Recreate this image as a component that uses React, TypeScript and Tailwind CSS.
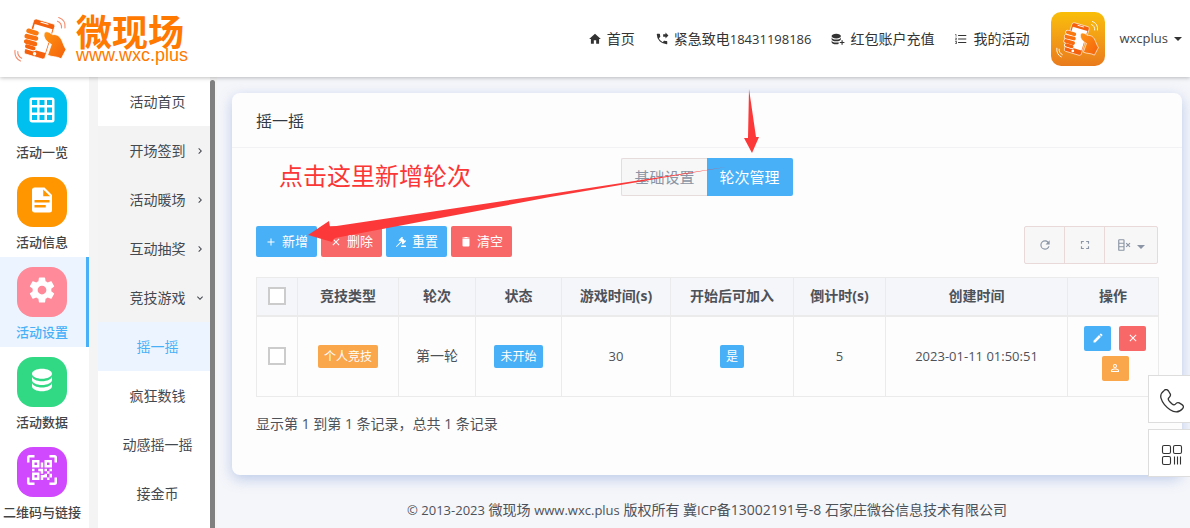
import React from "react";

const FONT = "font-['Open_Sans','Noto_Sans_CJK_SC',sans-serif]";

const P = {
  home: "M10,20V14H14V20H19V12H22L12,3L2,12H5V20H10Z",
  phone:
    "M18,11L23,6L18,1V4H14V8H18V11M20,15.5C18.75,15.5 17.55,15.3 16.43,14.93C16.08,14.82 15.69,14.9 15.41,15.17L13.21,17.37C10.38,15.93 8.06,13.62 6.62,10.78L8.82,8.57C9.1,8.31 9.18,7.92 9.07,7.57C8.7,6.45 8.5,5.25 8.5,4A1,1 0 0,0 7.5,3H4A1,1 0 0,0 3,4A17,17 0 0,0 20,21A1,1 0 0,0 21,20V16.5A1,1 0 0,0 20,15.5Z",
  dbPlus:
    "M9,3C4.58,3 1,4.79 1,7C1,9.21 4.58,11 9,11C13.42,11 17,9.21 17,7C17,4.79 13.42,3 9,3M1,9V12C1,14.21 4.58,16 9,16C13.42,16 17,14.21 17,12V9C17,11.21 13.42,13 9,13C4.58,13 1,11.21 1,9M1,14V17C1,19.21 4.58,21 9,21C10.41,21 11.79,20.81 13,20.46V17.46C11.79,17.81 10.41,18 9,18C4.58,18 1,16.21 1,14M18,14V17H15V19H18V22H20V19H23V17H20V14H18Z",
  list: "M7,13V11H21V13H7M7,19V17H21V19H7M7,7V5H21V7H7M3,8V5H2V4H4V8H3M2,17V16H5V20H2V19H4V18.5H3V17.5H4V17H2M4.25,10A.75.75 0 0 1 5,10.75C5,10.95 4.92,11.14 4.79,11.27L3.12,13H5V14H2V13.08L4,11H2V10H4.25Z",
  grid: "M10,4V8H14V4H10M16,4V8H20V4H16M16,10V14H20V10H16M16,16V20H20V16H16M14,20V16H10V20H14M8,20V16H4V20H8M8,14V10H4V14H8M8,8V4H4V8H8M10,14H14V10H10V14M4,2H20A2,2 0 0,1 22,4V20A2,2 0 0,1 20,22H4C2.92,22 2,21.1 2,20V4A2,2 0 0,1 4,2Z",
  doc: "M13,9H18.5L13,3.5V9M6,2H14L20,8V20A2,2 0 0,1 18,22H6C4.89,22 4,21.1 4,20V4C4,2.89 4.89,2 6,2M15,18V16H6V18H15M18,14V12H6V14H18Z",
  cog: "M12,15.5A3.5,3.5 0 0,1 8.5,12A3.5,3.5 0 0,1 12,8.5A3.5,3.5 0 0,1 15.5,12A3.5,3.5 0 0,1 12,15.5M19.43,12.97C19.47,12.65 19.5,12.33 19.5,12C19.5,11.67 19.47,11.34 19.43,11L21.54,9.37C21.73,9.22 21.78,8.95 21.66,8.73L19.66,5.27C19.54,5.05 19.27,4.96 19.05,5.05L16.56,6.05C16.04,5.66 15.5,5.32 14.87,5.07L14.5,2.42C14.46,2.18 14.25,2 14,2H10C9.75,2 9.54,2.18 9.5,2.42L9.13,5.07C8.5,5.32 7.96,5.66 7.44,6.05L4.95,5.05C4.73,4.96 4.46,5.05 4.34,5.27L2.34,8.73C2.21,8.95 2.27,9.22 2.46,9.37L4.57,11C4.53,11.34 4.5,11.67 4.5,12C4.5,12.33 4.53,12.65 4.57,12.97L2.46,14.63C2.27,14.78 2.21,15.05 2.34,15.27L4.34,18.73C4.46,18.95 4.73,19.03 4.95,18.95L7.44,17.94C7.96,18.34 8.5,18.68 9.13,18.93L9.5,21.58C9.54,21.82 9.75,22 10,22H14C14.25,22 14.46,21.82 14.5,21.58L14.87,18.93C15.5,18.67 16.04,18.34 16.56,17.94L19.05,18.95C19.27,19.03 19.54,18.95 19.66,18.73L21.66,15.27C21.78,15.05 21.73,14.78 21.54,14.63L19.43,12.97Z",
  db: "M12,3C7.58,3 4,4.79 4,7C4,9.21 7.58,11 12,11C16.42,11 20,9.21 20,7C20,4.79 16.42,3 12,3M4,9V12C4,14.21 7.58,16 12,16C16.42,16 20,14.21 20,12V9C20,11.21 16.42,13 12,13C7.58,13 4,11.21 4,9M4,14V17C4,19.21 7.58,21 12,21C16.42,21 20,19.21 20,17V14C20,16.21 16.42,18 12,18C7.58,18 4,16.21 4,14Z",
  qr: "M4,4H10V10H4V4M20,4V10H14V4H20M14,15H16V13H14V11H16V13H18V11H20V13H18V15H20V18H18V20H16V18H13V20H11V16H14V15M16,15V18H18V15H16M4,20V14H10V20H4M6,6V8H8V6H6M16,6V8H18V6H16M6,16V18H8V16H6M4,11H6V13H4V11M9,11H13V15H11V13H9V11M11,6H13V10H11V6M2,2V6H0V2A2,2 0 0,1 2,0H6V2H2M22,0A2,2 0 0,1 24,2V6H22V2H18V0H22M2,18V22H6V24H2A2,2 0 0,1 0,22V18H2M22,22V18H24V22A2,2 0 0,1 22,24H18V22H22Z",
  plus: "M19,13H13V19H11V13H5V11H11V5H13V11H19V13Z",
  close:
    "M19,6.41L17.59,5L12,10.59L6.41,5L5,6.41L10.59,12L5,17.59L6.41,19L12,13.41L17.59,19L19,17.59L13.41,12L19,6.41Z",
  gavel:
    "M2.3,20.28L11.9,10.68L10.5,9.26L9.78,9.97C9.39,10.36 8.76,10.36 8.37,9.97L7.66,9.26C7.27,8.87 7.27,8.24 7.66,7.85L13.32,2.19C13.71,1.8 14.34,1.8 14.73,2.19L15.44,2.9C15.83,3.29 15.83,3.92 15.44,4.31L14.73,5L16.15,6.43C16.54,6.04 17.17,6.04 17.56,6.43C17.95,6.82 17.95,7.46 17.56,7.85L18.97,9.26L19.68,8.55C20.07,8.16 20.71,8.16 21.1,8.55L21.8,9.26C22.19,9.65 22.19,10.29 21.8,10.68L16.15,16.33C15.76,16.72 15.12,16.72 14.73,16.33L14.03,15.63C13.63,15.24 13.63,14.6 14.03,14.21L14.73,13.5L13.32,12.09L3.71,21.7C3.32,22.09 2.69,22.09 2.3,21.7C1.91,21.31 1.91,20.67 2.3,20.28M20,19A2,2 0 0,1 22,21V22H12V21A2,2 0 0,1 14,19H20Z",
  trash: "M19,3H15.5L14.5,2H9.5L8.5,3H5V5H19M5,19A2,2 0 0,0 7,21H17A2,2 0 0,0 19,19V6H5V19Z",
  refresh:
    "M17.65,6.35C16.2,4.9 14.21,4 12,4A8,8 0 0,0 4,12A8,8 0 0,0 12,20C15.73,20 18.84,17.45 19.73,14H17.65C16.83,16.33 14.61,18 12,18A6,6 0 0,1 6,12A6,6 0 0,1 12,6C13.66,6 15.14,6.69 16.22,7.78L13,11H20V4L17.65,6.35Z",
  full: "M5,5H10V7H7V10H5V5M14,5H19V10H17V7H14V5M17,14H19V19H14V17H17V14M10,17V19H5V14H7V17H10Z",
  columns:
    "M4,2H11A2,2 0 0,1 13,4V20A2,2 0 0,1 11,22H4A2,2 0 0,1 2,20V4A2,2 0 0,1 4,2M4,10V14H11V10H4M4,16V20H11V16H4M4,4V8H11V4H4M16.59,8L15,9.41L17.59,12L15,14.59L16.41,16L19,13.41L21.59,16L23,14.59L20.41,12L23,9.41L21.59,8L19,10.59L16.59,8Z",
  pencil:
    "M20.71,7.04C21.1,6.65 21.1,6 20.71,5.63L18.37,3.29C18,2.9 17.35,2.9 16.96,3.29L15.12,5.12L18.87,8.87M3,17.25V21H6.75L17.81,9.93L14.06,6.18L3,17.25Z",
  account:
    "M12,4A4,4 0 0,1 16,8A4,4 0 0,1 12,12A4,4 0 0,1 8,8A4,4 0 0,1 12,4M12,5.9A2.1,2.1 0 0,0 9.9,8A2.1,2.1 0 0,0 12,10.1A2.1,2.1 0 0,0 14.1,8A2.1,2.1 0 0,0 12,5.9M12,13C14.67,13 20,14.33 20,17V20H4V17C4,14.33 9.33,13 12,13M12,14.9C9.03,14.9 5.9,16.36 5.9,17V18.1H18.1V17C18.1,16.36 14.97,14.9 12,14.9Z",
  chevR: "M8.59,16.58L13.17,12L8.59,7.41L10,6L16,12L10,18L8.59,16.58Z",
  chevD: "M7.41,8.58L12,13.17L16.59,8.58L18,10L12,16L6,10L7.41,8.58Z",
};

function Icon({ d, className }: { d: string; className: string }) {
  return (
    <svg viewBox="0 0 24 24" fill="currentColor" fillRule="evenodd" aria-hidden="true" className={"shrink-0 " + className}>
      <path d={d} />
    </svg>
  );
}

function Hands({ line, className }: { line: string; className: string }) {
  const hand = "url(#handFill)";
  return (
    <svg viewBox="0 0 54 46" className={className} aria-hidden="true">
      <defs>
        <linearGradient id="handFill" x1="0" y1="0" x2="1" y2="1">
          <stop offset="0" stopColor="#ff9412" />
          <stop offset="1" stopColor="#f4600c" />
        </linearGradient>
      </defs>
      <path d="M22.5 3 L39.5 8 Q41.4 8.7 40.8 10.6 L31 41.5 Q30.3 43.5 28.3 43 L11.6 38 Q9.7 37.3 10.3 35.4 L19.6 4.7 Q20.4 2.5 22.5 3Z" fill="#f4600c" stroke="white" strokeWidth=".8" />
      <path d="M20.7 8 L38.5 13.2 L31.3 37 L13.4 32Z" fill="white" />
      <path d="M27 6.3 l7 2" stroke="white" strokeWidth="1.1" strokeLinecap="round" />
      <circle cx="20.6" cy="37.7" r="1.7" fill="white" />
      <g strokeWidth="4.6" strokeLinecap="round">
        <path d="M14.5 14.8 L22.5 17.2" stroke="#fff" strokeWidth="6" />
        <path d="M12.7 20.2 L22 22.4" stroke="#fff" strokeWidth="6" />
        <path d="M12.2 25.5 L21 28" stroke="#fff" strokeWidth="6" />
        <path d="M13 30.3 L19.5 32.3" stroke="#fff" strokeWidth="6" />
        <path d="M14.5 14.8 L22.5 17.2" stroke="#fb7a10" />
        <path d="M12.7 20.2 L22 22.4" stroke="#fa7210" />
        <path d="M12.2 25.5 L21 28" stroke="#f86b0e" />
        <path d="M13 30.3 L19.5 32.3" stroke="#f6640c" strokeWidth="4" />
      </g>
      <path d="M30.2 17.5 C31.2 14.6 35 15.6 38.5 18.6 C43.5 18 46.8 21 48.6 26.2 C49.5 29 51 31.6 52 33.6 L47.2 42.8 C43 40.2 38 41.2 33.6 39.2 L37.4 28.4 C33.5 26.6 28.8 21.8 30.2 17.5Z" fill={hand} stroke="white" strokeWidth=".8" />
      <g fill="none" stroke={line} strokeWidth="1.1" strokeLinecap="round">
        <path d="M43.5 5.2 Q48 7 47.5 12" />
        <path d="M44.7 1.5 Q52 4 51 12" />
        <path d="M3.8 35.5 Q3.4 40 7.7 42.2" />
        <path d="M1 34.3 Q.2 42 6.5 45" />
      </g>
    </svg>
  );
}

const topLinks = [
  { icon: P.home, label: "首页", num: "" },
  { icon: P.phone, label: "紧急致电", num: "18431198186" },
  { icon: P.dbPlus, label: "红包账户充值", num: "" },
  { icon: P.list, label: "我的活动", num: "" },
];

const mainNav = [
  { icon: P.grid, label: "活动一览", bg: "bg-[#00c0ef]" },
  { icon: P.doc, label: "活动信息", bg: "bg-[#ff9600]" },
  { icon: P.cog, label: "活动设置", bg: "bg-[#ff8a99]", active: true },
  { icon: P.db, label: "活动数据", bg: "bg-[#31d985]" },
  { icon: P.qr, label: "二维码与链接", bg: "bg-[#d149ff]" },
];

const subNav = [
  { label: "活动首页", style: "bg-white" },
  { label: "开场签到", style: "bg-[#f3f3f3]", chev: P.chevR },
  { label: "活动暖场", style: "bg-[#f3f3f3]", chev: P.chevR },
  { label: "互动抽奖", style: "bg-[#f3f3f3]", chev: P.chevR },
  { label: "竞技游戏", style: "bg-[#f3f3f3]", chev: P.chevD },
  { label: "摇一摇", style: "bg-[#ecf5ff] text-[#48b0f7]" },
  { label: "疯狂数钱", style: "bg-white" },
  { label: "动感摇一摇", style: "bg-white" },
  { label: "接金币", style: "bg-white" },
];

const actions = [
  { icon: P.plus, label: "新增", bg: "bg-[#48b0f7]" },
  { icon: P.close, label: "删除", bg: "bg-[#f96868]" },
  { icon: P.gavel, label: "重置", bg: "bg-[#48b0f7]" },
  { icon: P.trash, label: "清空", bg: "bg-[#f96868]" },
];

const columns = [
  { label: "竞技类型", w: "w-[101px]" },
  { label: "轮次", w: "w-[77px]" },
  { label: "状态", w: "w-[86px]" },
  { label: "游戏时间(s)", w: "w-[109px]" },
  { label: "开始后可加入", w: "w-[123px]" },
  { label: "倒计时(s)", w: "w-[92px]" },
  { label: "创建时间", w: "w-[182px]" },
  { label: "操作", w: "w-[91px]" },
];

function Check({ label }: { label: string }) {
  return (
    <input
      type="checkbox"
      aria-label={label}
      className="mx-auto block size-[18px] appearance-none border-2 border-[#cccccc] bg-white checked:bg-[#48b0f7]"
    />
  );
}

function Badge({ children, bg }: { children: React.ReactNode; bg: string }) {
  return <span className={"inline-block rounded-xs px-1.5 align-middle text-xs leading-[23px] text-white " + bg}>{children}</span>;
}

function Header() {
  return (
    <header className="relative z-20 flex h-[77px] shrink-0 items-center bg-white pr-2 pl-[14px] shadow-[0_1px_4px_rgba(0,0,0,0.25)]">
      <a href="#home" className="flex items-center gap-2 text-[#ff7800]">
        <Hands line="#f58a6a" className="h-[46px] w-[54px]" />
        <span className="flex flex-col pt-1 font-['Liberation_Sans','Noto_Sans_CJK_SC',sans-serif]">
          <span className="text-4xl leading-7 font-bold">微现场</span>
          <span className="text-lg leading-[14px]">www.wxc.plus</span>
        </span>
      </a>
      <nav className="ml-auto flex items-center text-[#333]">
        {topLinks.map((l) => (
          <a key={l.label} href="#link" className="flex items-center gap-[5px] px-[10px] text-sm">
            <Icon d={l.icon} className="size-[14px]" />
            <span>
              {l.label}
              {l.num && <span className="text-[13px]">{l.num}</span>}
            </span>
          </a>
        ))}
      </nav>
      <button type="button" className="ml-3 flex items-center text-[13px] text-[#444]">
        <span className="mr-[14px] flex size-[54px] items-center justify-center rounded-[10px] bg-linear-to-b from-[#f9be08] to-[#e97a1c]">
          <Hands line="#ffffff" className="h-[38px] w-11" />
        </span>
        wxcplus
        <span className="ml-1.5 border-x-4 border-t-4 border-x-transparent border-t-[#333]" />
      </button>
    </header>
  );
}

function MainNav() {
  return (
    <nav className="w-[89px] shrink-0 bg-white">
      {mainNav.map((n) => (
        <a
          key={n.label}
          href="#section"
          className={
            "flex h-[90px] flex-col items-center pt-[10px] " +
            (n.active ? "border-r-3 border-[#48b0f7] bg-[#ecf5ff] pr-[2px] text-[#48b0f7]" : "pr-[5px] text-[#444]")
          }
        >
          <span className={"flex h-[50px] w-[50px] shrink-0 justify-center rounded-2xl pt-2 text-white " + n.bg}>
            <Icon d={n.icon} className="size-[30px]" />
          </span>
          <span className="mt-[5px] text-[13px] leading-5 font-medium whitespace-nowrap">{n.label}</span>
        </a>
      ))}
    </nav>
  );
}

function SubNav() {
  return (
    <nav className="flex w-[128px] shrink-0 bg-[#f4f4f4] pl-[9px]">
      <div className="min-w-0 flex-1 bg-white text-sm text-[#444950]">
        {subNav.map((s) => (
          <a key={s.label} href="#page" className={"flex h-[49px] items-center pl-[23px] " + s.style}>
            <span className="flex flex-1 justify-center whitespace-nowrap">{s.label}</span>
            <span className="flex w-4 shrink-0">{s.chev && <Icon d={s.chev} className="size-3" />}</span>
          </a>
        ))}
      </div>
      <div className="mt-[3px] w-[5px] rounded-t-full bg-[#808080]" />
      <div className="w-[2px]" />
    </nav>
  );
}

function Tools() {
  const cell = "flex h-9 items-center justify-center text-[#8b95a5] ";
  return (
    <div className="flex divide-x divide-[#ead9d9] rounded-xs border border-[#ead9d9] bg-[#f7f7f7]">
      <button type="button" aria-label="刷新" className={cell + "w-10"}>
        <Icon d={P.refresh} className="size-[14px]" />
      </button>
      <button type="button" aria-label="全屏" className={cell + "w-10"}>
        <Icon d={P.full} className="size-[14px]" />
      </button>
      <button type="button" aria-label="列" className={cell + "w-[52px] gap-1.5"}>
        <Icon d={P.columns} className="size-[14px]" />
        <span className="mt-1 border-x-4 border-t-4 border-x-transparent border-t-[#8b95a5]" />
      </button>
    </div>
  );
}

function RoundTable() {
  const cell = "border border-[#ebebeb] p-0 text-center ";
  const op = "flex h-[25px] w-[27px] items-center justify-center rounded-xs text-white ";
  return (
    <table className="mt-[13px] w-full table-fixed border-collapse text-sm text-[#4d5259]">
      <thead>
        <tr className="h-[38px] bg-[#f5f6fa]">
          <th className={cell + "w-[41px] border-b-2"}>
            <Check label="全选" />
          </th>
          {columns.map((c) => (
            <th key={c.label} className={cell + "border-b-2 font-bold whitespace-nowrap " + c.w}>
              {c.label}
            </th>
          ))}
        </tr>
      </thead>
      <tbody>
        <tr className="h-[81px]">
          <td className={cell}>
            <Check label="选择第一轮" />
          </td>
          <td className={cell}>
            <Badge bg="bg-[#faa64b]">个人竞技</Badge>
          </td>
          <td className={cell}>第一轮</td>
          <td className={cell}>
            <Badge bg="bg-[#48b0f7]">未开始</Badge>
          </td>
          <td className={cell + "text-[13px]"}>30</td>
          <td className={cell}>
            <Badge bg="bg-[#48b0f7]">是</Badge>
          </td>
          <td className={cell + "text-[13px]"}>5</td>
          <td className={cell + "text-[13px]"}>2023-01-11 01:50:51</td>
          <td className={cell}>
            <div className="flex flex-wrap justify-center gap-x-2 gap-y-[5px] pr-2 pb-1.5 pl-3">
              <button type="button" aria-label="编辑" className={op + "bg-[#48b0f7]"}>
                <Icon d={P.pencil} className="size-3" />
              </button>
              <button type="button" aria-label="删除本轮" className={op + "bg-[#f96868]"}>
                <Icon d={P.close} className="size-3" />
              </button>
              <button type="button" aria-label="参与人员" className={op + "bg-[#faa64b]"}>
                <Icon d={P.account} className="size-3" />
              </button>
            </div>
          </td>
        </tr>
      </tbody>
    </table>
  );
}

function Annotations() {
  return (
    <div className="pointer-events-none absolute inset-0">
      <p className="absolute top-[65px] left-[47px] text-2xl leading-9 text-[#fc3636]">点击这里新增轮次</p>
      <svg viewBox="0 0 560 170" className="absolute -top-1 left-0 h-[170px] w-[560px]" fill="#fc3838" aria-hidden="true">
        <path d="M517 0 L524 48 L527 48 L520 64 L512 49 L516 49Z" />
        <path d="M76 146 L97 132 L98 138 L318 105 L494 78 L318 108 L103 149 L100 153Z" />
      </svg>
    </div>
  );
}

export default function App() {
  const side = "flex h-12 w-[42px] items-center justify-center border border-r-0 border-[#ddd] bg-white text-[#333] ";
  return (
    <div className={"flex h-screen flex-col overflow-hidden bg-[#f5f6fa] " + FONT}>
      <Header />
      <div className="flex min-h-0 flex-1 overflow-hidden">
        <MainNav />
        <SubNav />
        <main className="min-w-0 flex-1 pt-4 pr-2 pl-[15px]">
          <section className="relative rounded-lg bg-[#fdfdfd] shadow-[0_4px_14px_rgba(80,120,200,0.35)]">
            <h1 className="border-b border-[#f2f2f4] px-6 pt-4 pb-[14px] text-base leading-6 text-[#313944]">摇一摇</h1>
            <div className="px-6 pt-[10px] pb-[39px]">
              <div className="flex justify-center text-[15px]">
                <button type="button" className="h-[38px] rounded-l-xs border border-r-0 border-[#e6dcdc] bg-[#f7f7f7] px-3 text-[#8b95a5]">
                  基础设置
                </button>
                <button type="button" className="h-[38px] rounded-r-xs bg-[#48b0f7] px-[13px] text-white">
                  轮次管理
                </button>
              </div>
              <div className="mt-[30px] flex items-start justify-between">
                <div className="flex gap-1">
                  {actions.map((a) => (
                    <button
                      key={a.label}
                      type="button"
                      className={"flex h-[31px] items-center gap-[5px] rounded-xs px-[9px] text-[13px] text-white " + a.bg}
                    >
                      <Icon d={a.icon} className="size-3" />
                      {a.label}
                    </button>
                  ))}
                </div>
                <Tools />
              </div>
              <RoundTable />
              <p className="mt-[15px] text-sm leading-6 text-[#4d5259]">显示第 1 到第 1 条记录，总共 1 条记录</p>
            </div>
            <Annotations />
          </section>
          <footer className="mt-[23px] text-center text-sm leading-6 whitespace-nowrap text-[#4d5259]">
            <span className="text-[13px]">© 2013-2023</span> 微现场 <span className="text-[13px]">www.wxc.plus</span> 版权所有 冀
            <span className="text-[13px]">ICP</span>备13002191号-8 石家庄微谷信息技术有限公司
          </footer>
        </main>
      </div>
      <aside className="fixed right-0 bottom-[51px] z-30 flex flex-col gap-1.5">
        <button type="button" aria-label="电话" className={side}>
          <svg viewBox="0 0 24 24" className="mt-1 ml-1 size-6" fill="none" stroke="currentColor" strokeWidth="1.3" strokeLinejoin="round" aria-hidden="true">
            <path d="M4.2 1.4 C5.8 -.1 7.4 .5 8.5 2 L10.2 4.8 C11 6.5 10.3 7.6 8.9 8.7 C7.8 9.7 8.2 10.9 9.3 12.2 L11.8 14.8 C13.2 16 14.4 16.2 15.4 15.1 C16.5 13.7 17.6 13.1 19.2 13.9 L22 15.6 C23.6 16.7 23.9 18.2 22.5 19.7 C19.6 23 15 24 10.1 20.7 C5.8 17.7 2.4 13.9 1 9.1 C.1 6 1.7 3.3 4.2 1.4Z" />
          </svg>
        </button>
        <button type="button" aria-label="二维码" className={side}>
          <svg viewBox="0 0 22 22" className="mt-1 ml-1 size-[22px]" fill="none" stroke="currentColor" strokeWidth="1.1" aria-hidden="true">
            <rect x="1.5" y="1.5" width="8" height="8" rx="1.5" />
            <rect x="12.5" y="1.5" width="8" height="8" rx="1.5" />
            <rect x="1.5" y="12.5" width="8" height="8" rx="1.5" />
            <path d="M13.5 12.5v8M16.5 12.5v8M19.5 12.5v8" />
          </svg>
        </button>
      </aside>
    </div>
  );
}
